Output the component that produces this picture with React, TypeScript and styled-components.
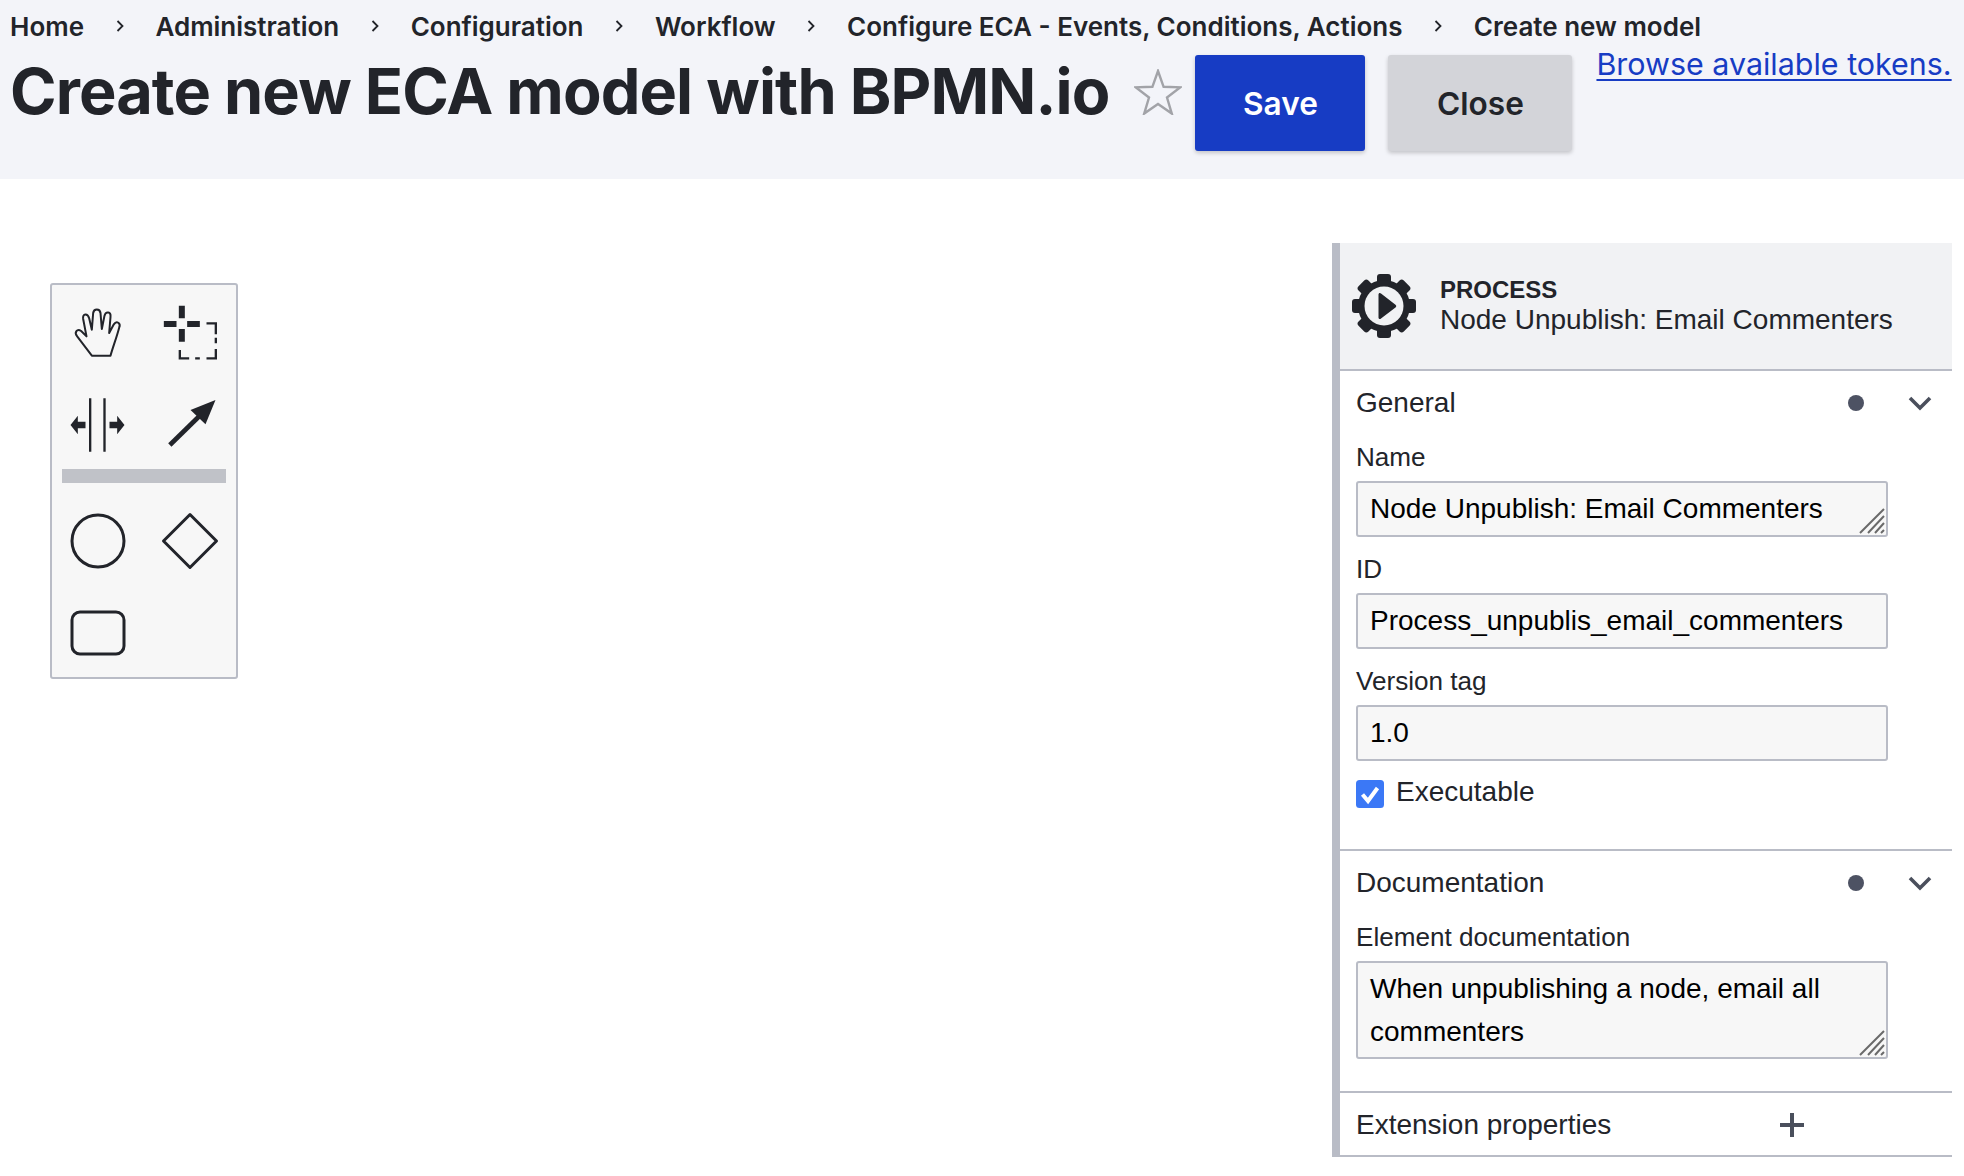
import React from "react";
import styled, { createGlobalStyle } from "styled-components";

const Global = createGlobalStyle`
  html, body { margin: 0; padding: 0; background: #fff; }
  body { font-family: Inter, "Liberation Sans", sans-serif; color: #22242a; }
  * { box-sizing: border-box; }
`;

const Page = styled.div`
  width: 1964px;
  height: 1176px;
  overflow: hidden;
`;

const Header = styled.header`
  height: 179px;
  background: #f3f4f9;
  padding: 9px 12px 0 10px;
`;

const Crumbs = styled.nav`
  display: flex;
  align-items: center;
  height: 34px;
  margin-bottom: 1px;
  font-size: 26px;
  font-weight: 600;
  color: #22242a;
  white-space: nowrap;
`;

const CrumbSep = styled.svg`
  width: 8px;
  height: 12px;
  margin: 0 31.7px;
  flex: none;
`;

const TitleRow = styled.div`
  display: flex;
  align-items: flex-start;
`;

const Title = styled.h1`
  margin: -1px 0 0;
  font-size: 63px;
  line-height: 96px;
  font-weight: 700;
  letter-spacing: -0.9px;
  color: #22242a;
  white-space: nowrap;
`;

const Star = styled.svg`
  width: 48px;
  height: 46px;
  margin: 25px 13px 0 25px;
  flex: none;
`;

const Button = styled.div<{ $primary?: boolean }>`
  display: flex;
  align-items: center;
  justify-content: center;
  height: 96px;
  margin-top: 11px;
  padding-top: 1px;
  border-radius: 3px;
  font-size: 31.6px;
  font-weight: 600;
  background: ${(p) => (p.$primary ? "#173cc4" : "#d3d4d9")};
  color: ${(p) => (p.$primary ? "#fff" : "#22242a")};
  width: ${(p) => (p.$primary ? "170px" : "184px")};
  margin-right: ${(p) => (p.$primary ? "23px" : "24px")};
  box-shadow: 0 2px 4px rgba(0, 0, 0, 0.2);
`;

const TokenLink = styled.a`
  margin-top: 3px;
  font-size: 30.45px;
  line-height: 34px;
  color: #173cc4;
  text-decoration: underline;
  text-decoration-thickness: 2px;
  text-underline-offset: 4px;
  white-space: nowrap;
`;

const Main = styled.main`
  display: flex;
  justify-content: space-between;
  align-items: flex-start;
  padding: 0 12px 0 50px;
`;

const Palette = styled.div`
  width: 188px;
  height: 396px;
  margin-top: 104px;
  padding-top: 2px;
  border: 2px solid #b9bcc6;
  border-radius: 3px;
  background: #f7f7f7;
`;

const ToolGrid = styled.div`
  display: grid;
  grid-template-columns: 92px 92px;
  grid-auto-rows: 92px;
`;

const Tool = styled.div`
  display: flex;
  align-items: center;
  justify-content: center;
  svg { width: 60px; height: 60px; display: block; }
`;

const Separator = styled.div`
  height: 14px;
  margin: -2px 10px 12px;
  background: #c0c2c8;
`;

const Panel = styled.aside`
  width: 620px;
  margin-top: 64px;
  border-left: 8px solid #b9bcc6;
  border-bottom: 2px solid #b9bcc6;
  font-family: "Liberation Sans", Arial, sans-serif;
  color: #22242a;
  font-size: 28px;
  line-height: 32px;
`;

const PanelHead = styled.div`
  display: flex;
  align-items: center;
  height: 126px;
  padding-left: 11px;
  background: #f1f2f4;
`;

const PanelHeadIcon = styled.svg`
  width: 66px;
  height: 66px;
  flex: none;
  margin-right: 23px;
`;

const PanelHeadText = styled.div`
  display: flex;
  flex-direction: column;
  padding-bottom: 2px;
`;

const PanelType = styled.div`
  font-size: 24px;
  line-height: 29px;
  font-weight: 700;
`;

const PanelName = styled.div`
  margin-top: 1px;
  font-size: 28px;
  line-height: 30px;
`;

const Group = styled.section<{ $pad: number }>`
  border-top: 2px solid #b9bcc6;
  padding: 0 0 ${(p) => p.$pad}px 16px;
`;

const GroupHead = styled.div`
  display: flex;
  align-items: center;
  height: 62px;
  padding-top: 2px;
`;

const GroupTitle = styled.div`
  flex: 1;
`;

const Dot = styled.span`
  width: 16px;
  height: 16px;
  border-radius: 50%;
  background: #4d5263;
  margin-right: 44px;
`;

const Chevron = styled.svg`
  width: 24px;
  height: 16px;
  margin-right: 20px;
`;

const AddRow = styled.div`
  display: flex;
  align-items: center;
  height: 62px;
  width: 448px;
  padding-top: 2px;
  justify-content: space-between;
`;

const Plus = styled.svg`
  width: 24px;
  height: 24px;
`;

const Label = styled.div`
  height: 30px;
  margin: 9px 0 9px;
  line-height: 30px;
  font-size: 26.1px;
`;

const NextLabel = styled(Label)`
  margin-top: 17px;
`;

const Field = styled.div<{ $tall?: boolean }>`
  position: relative;
  width: 532px;
  height: ${(p) => (p.$tall ? "98px" : "56px")};
  padding: ${(p) => (p.$tall ? "4px 12px 0" : "10px 12px 0")};
  border: 2px solid #b9bcc6;
  border-radius: 3px;
  background: #f7f7f7;
  color: #000;
  font-size: 28px;
  line-height: ${(p) => (p.$tall ? "43px" : "32px")};
  white-space: pre-line;
`;

const Grip = styled.svg`
  position: absolute;
  right: 1px;
  bottom: 1px;
  width: 26px;
  height: 26px;
`;

const CheckRow = styled.div`
  display: flex;
  align-items: center;
  height: 28px;
  margin-top: 19px;
`;

const CheckLabel = styled.span`
  margin-top: -4px;
`;

const Check = styled.svg`
  width: 28px;
  height: 28px;
  margin-right: 12px;
  flex: none;
`;

const Crumb = ["Home", "Administration", "Configuration", "Workflow", "Configure ECA - Events, Conditions, Actions", "Create new model"];

const GripIcon = () => (
  <Grip viewBox="0 0 26 26">
    <path d="M1 25L25 1M9 25L25 8M16 25L25 15M22 25L25 22" stroke="#6a6a6a" strokeWidth="2" fill="none" />
  </Grip>
);

const ChevronIcon = () => (
  <Chevron viewBox="0 0 24 16">
    <path d="M2 3L12 13L22 3" stroke="#4a4f5c" strokeWidth="3.6" fill="none" />
  </Chevron>
);

const teeth = [0, 45, 90, 135, 180, 225, 270, 315];

export default function App() {
  return (
    <Page>
      <Global />
      <Header>
        <Crumbs>
          {Crumb.map((c, i) => (
            <React.Fragment key={c}>
              {i > 0 && (
                <CrumbSep viewBox="0 0 8 12">
                  <path d="M1.5 1L6.5 6L1.5 11" stroke="#22242a" strokeWidth="1.8" fill="none" />
                </CrumbSep>
              )}
              <span>{c}</span>
            </React.Fragment>
          ))}
        </Crumbs>
        <TitleRow>
          <Title>Create new ECA model with BPMN.io</Title>
          <Star viewBox="0 0 48 46">
            <path d="M24 2L29.6 17.8L46.4 18.3L33 28.5L37.8 44.6L24 35L10.2 44.6L15 28.5L1.6 18.3L18.4 17.8Z" fill="none" stroke="#a2a3a8" strokeWidth="2.4" />
          </Star>
          <Button $primary>Save</Button>
          <Button>Close</Button>
          <TokenLink>Browse available tokens.</TokenLink>
        </TitleRow>
      </Header>
      <Main>
        <Palette>
          <ToolGrid>
            <Tool>
              <svg viewBox="25.5 24 180 180">
                <path
                  transform="translate(43 42)"
                  d="M54 140L10 82C0 70 10 58 22 66L38 82L28 30C25 12 42 12 46 28L54 62L58 12C60 -2 78 -2 80 12L84 60L92 20C96 6 112 8 110 24L106 72L120 46C128 34 142 42 136 56C128 86 118 112 110 140Z"
                  fill="none"
                  stroke="#22242a"
                  strokeWidth="6"
                  strokeLinejoin="round"
                />
              </svg>
            </Tool>
            <Tool>
              <svg viewBox="298.5 24 180 180">
                <path d="M355 32H373V70H355ZM355 102H373V140H355ZM310 78H348V96H310ZM380 78H418V96H380Z" fill="#22242a" />
                <path d="M438 85H466V118M466 128V145M466 162V190H438M418 190H404M386 190H358V165" fill="none" stroke="#22242a" strokeWidth="7" />
              </svg>
            </Tool>
            <Tool>
              <svg viewBox="25.5 300 180 180">
                <path d="M92 310V470M135 310V470" fill="none" stroke="#22242a" strokeWidth="7" />
                <path d="M33 390L55 362V380H78V400H55V418ZM195 390L173 362V380H150V400H173V418Z" fill="#22242a" />
              </svg>
            </Tool>
            <Tool>
              <svg viewBox="298.5 300 180 180">
                <path d="M328 450L420 360" fill="none" stroke="#22242a" strokeWidth="14" />
                <path d="M465 315L390 345L435 388Z" fill="#22242a" />
              </svg>
            </Tool>
          </ToolGrid>
          <Separator />
          <ToolGrid>
            <Tool>
              <svg viewBox="0 0 60 60">
                <circle cx="30" cy="30" r="26" fill="none" stroke="#22242a" strokeWidth="3" />
              </svg>
            </Tool>
            <Tool>
              <svg viewBox="0 0 60 60">
                <path d="M30 3.5L56.5 30L30 56.5L3.5 30Z" fill="none" stroke="#22242a" strokeWidth="3" strokeLinejoin="round" />
              </svg>
            </Tool>
            <Tool>
              <svg viewBox="0 0 60 60">
                <rect x="4" y="9" width="52" height="42" rx="8" fill="none" stroke="#22242a" strokeWidth="3" />
              </svg>
            </Tool>
          </ToolGrid>
        </Palette>
        <Panel>
          <PanelHead>
            <PanelHeadIcon viewBox="-33 -33 66 66">
              {teeth.map((a) => (
                <rect key={a} x="-7" y="-32" width="14" height="14" rx="3" fill="#22242a" transform={`rotate(${a})`} />
              ))}
              <circle r="26" fill="#22242a" />
              <circle r="19.5" fill="#f1f2f4" />
              <path d="M-5.5 -11.5C-5.5 -13 -4 -13.5 -3 -12.5L11.5 -1.2C12.5 -0.4 12.5 0.6 11.5 1.4L-3 12.5C-4 13.5 -5.5 13 -5.5 11.5Z" fill="#22242a" />
            </PanelHeadIcon>
            <PanelHeadText>
              <PanelType>PROCESS</PanelType>
              <PanelName>Node Unpublish: Email Commenters</PanelName>
            </PanelHeadText>
          </PanelHead>
          <Group $pad={41}>
            <GroupHead>
              <GroupTitle>General</GroupTitle>
              <Dot />
              <ChevronIcon />
            </GroupHead>
            <Label>Name</Label>
            <Field>
              Node Unpublish: Email Commenters
              <GripIcon />
            </Field>
            <NextLabel>ID</NextLabel>
            <Field>Process_unpublis_email_commenters</Field>
            <NextLabel>Version tag</NextLabel>
            <Field>1.0</Field>
            <CheckRow>
              <Check viewBox="0 0 28 28">
                <rect width="28" height="28" rx="3.5" fill="#3b78f6" />
                <path d="M6.5 14.5L12 21L21.5 8" fill="none" stroke="#fff" strokeWidth="4" />
              </Check>
              <CheckLabel>Executable</CheckLabel>
            </CheckRow>
          </Group>
          <Group $pad={32}>
            <GroupHead>
              <GroupTitle>Documentation</GroupTitle>
              <Dot />
              <ChevronIcon />
            </GroupHead>
            <Label>Element documentation</Label>
            <Field $tall>
              {"When unpublishing a node, email all\ncommenters"}
              <GripIcon />
            </Field>
          </Group>
          <Group $pad={0}>
            <AddRow>
              Extension properties
              <Plus viewBox="0 0 24 24">
                <path d="M12 0V24M0 12H24" stroke="#4a4f5c" strokeWidth="4" />
              </Plus>
            </AddRow>
          </Group>
        </Panel>
      </Main>
    </Page>
  );
}
